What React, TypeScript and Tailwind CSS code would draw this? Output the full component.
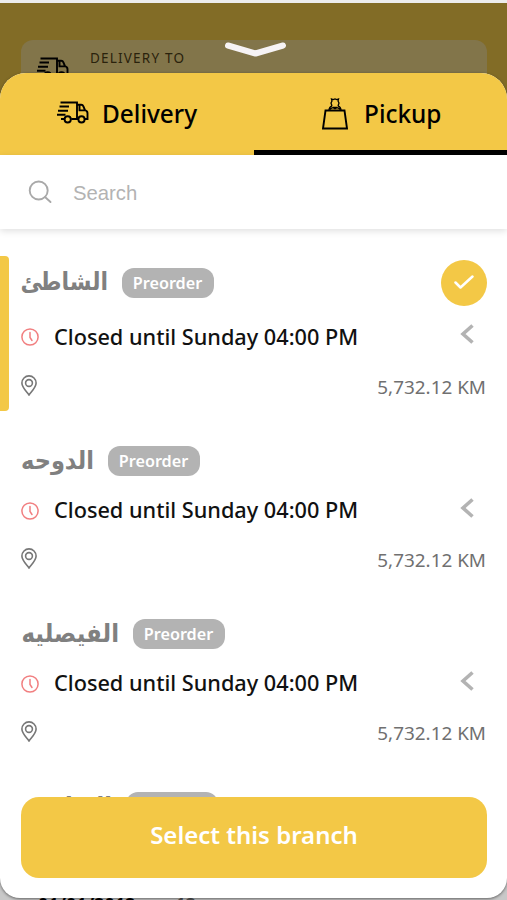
import clsx from "clsx";

type Branch = {
  name: string;
  nameClass: string;
  selected?: boolean;
};

const branches: Branch[] = [
  { name: "الشاطئ", nameClass: "w-[87px] text-[24.500px]", selected: true },
  { name: "الدوحه", nameClass: "w-[73px] text-[25px]" },
  { name: "الفيصليه", nameClass: "w-[98px] text-[25.500px] pt-px" },
  { name: "النزله", nameClass: "w-[91px] text-[25px] pt-px" },
];

function TruckIcon({ className }: { className?: string }) {
  return (
    <svg viewBox="0 0 32 23" className={className} fill="none" stroke="currentColor" strokeWidth="1.900">
      <path d="M3.500 1.500h16.500v16.500h-5.800M20 3.800h4.200c1.100 0 1.800.5 2.200 1.500l1.600 3.900c1.700.6 2.500 1.500 2.500 3v5.800h-2.500M20 18h1.300M22.500 4v5.400h5.500" />
      <path d="M2.500 5.500h9.500M1 9.700h10M0 13.800h8.500M4 18h3.300" />
      <circle cx="10.700" cy="18.400" r="3.100" />
      <circle cx="24.500" cy="18.400" r="3.100" />
    </svg>
  );
}

function BagIcon() {
  return (
    <svg viewBox="0 0 26 32" className="w-[26px] h-8" fill="none" stroke="currentColor" strokeWidth="1.900">
      <path d="M3.500 12.500h19L25 30.500H1z" />
      <path d="M7 12c.2-2.200 1.200-3.500 3-4.200M19 12c-.2-2.200-1.200-3.500-3-4.200M10 8 9 5l1-2-.5-2 1.700.6L13 1l1.800.6L16.500 1 16 3l1 2-1 3M8 11.500c1.300-1.800 3.200-2.200 5-.8 1.800-1.400 3.700-1 5 .8M10.500 9.300h5" strokeWidth="1.300" />
    </svg>
  );
}

function Tabs() {
  return (
    <div className="flex h-[82px] bg-[#f3c846] text-[24.400px] font-medium text-black">
      <button className="flex w-[254px] items-center pl-[57px]">
        <TruckIcon className="w-8 h-[23px] mb-[3px]" />
        <span className="ml-[13px]">Delivery</span>
      </button>
      <button className="flex flex-1 items-center border-b-[5px] border-black pl-[68px] pt-[5px]">
        <BagIcon />
        <span className="ml-[16px]">Pickup</span>
      </button>
    </div>
  );
}

function SearchBar() {
  return (
    <div className="flex h-[74px] items-center bg-white pl-7 shadow-[0_2px_7px_rgba(0,0,0,0.13)]">
      <svg viewBox="0 0 24 24" className="size-6 mb-px" fill="none" stroke="#a9a9a9" strokeWidth="1.900">
        <circle cx="10.700" cy="10.500" r="9" />
        <path d="m17 17 5.500 5" strokeLinecap="round" />
      </svg>
      <span className="ml-[21px] pt-[2px] font-['Liberation_Sans',sans-serif] text-[20.300px] text-[#b3b3b3]">Search</span>
    </div>
  );
}

function BranchItem({ name, nameClass, selected }: Branch) {
  return (
    <li
      className={clsx(
        "relative mb-[27px] pl-[21px] pr-[21px]",
        selected && "before:absolute before:left-0 before:top-0 before:h-[155px] before:w-[9px] before:rounded-r-[4px] before:bg-[#f3c846]"
      )}
    >
      <div className={clsx("flex items-center", selected ? "h-[54px]" : "h-[46px]")}>
        <span
          dir="rtl"
          className={clsx(
            "whitespace-nowrap pb-0.5 leading-none font-bold text-[#808080] font-['DejaVu_Sans_Condensed','DejaVu_Sans',sans-serif]",
            nameClass
          )}
        >
          {name}
        </span>
        <span className="ml-[14px] h-[30px] w-[92px] rounded-[12px] bg-[#b3b3b3] pr-px text-center text-[16.200px] leading-[31px] font-semibold text-white">
          Preorder
        </span>
        {selected && (
          <span className="ml-auto -mr-px flex size-[46px] items-center justify-center rounded-full bg-[#f3c846]">
            <svg viewBox="0 0 20 14" className="w-5 h-[14px] mb-0.5" fill="none" stroke="white" strokeWidth="2.500" strokeLinecap="round" strokeLinejoin="round">
              <path d="m1.500 7.500 5 5L18.500 1.500" />
            </svg>
          </span>
        )}
      </div>
      <div className={clsx("flex items-center", selected ? "h-[54px]" : "h-[53px]")}>
        <svg viewBox="0 0 18 18" className="size-[18px]" fill="none" stroke="#f17f80" strokeWidth="1.500" strokeLinecap="round">
          <circle cx="9" cy="9" r="8.100" />
          <path d="M9 4.500v5l2 3" />
        </svg>
        <span className="ml-[15px] text-[21.700px] font-medium whitespace-nowrap text-[#111]">Closed until Sunday 04:00 PM</span>
        <svg viewBox="0 0 14 20" className="ml-auto mr-3 mb-1.5 h-5 w-[14px]" fill="none" stroke="#b3b3b3" strokeWidth="3.600">
          <path d="M12.500 1.500 3 10l9.500 8.500" />
        </svg>
      </div>
      <div className="flex h-[47px] items-center justify-between">
        <svg viewBox="0 0 16 21" className="w-4 h-[21px] mb-1" fill="none" stroke="#777" strokeWidth="1.600">
          <path d="M8 20C5.500 16.500.9 12.300.9 8a7.100 7.100 0 0 1 14.200 0c0 4.300-4.600 8.500-7.100 12z" />
          <circle cx="8" cy="8" r="3.400" />
        </svg>
        <span className="text-[18.900px] text-[#707070]">5,732.12 KM</span>
      </div>
    </li>
  );
}

export default function App() {
  return (
    <div className="relative h-[900px] w-[507px] overflow-hidden bg-[#c8c8c8] font-['Noto_Sans',sans-serif]">
      <div className="h-[150px] border-t-[3px] border-[#ececec] bg-[#826c26] pl-[21px] pr-5 pt-[37px]">
        <div className="flex h-[70px] rounded-[12px] bg-[#82754a] pl-4 text-[#2a220c]">
          <TruckIcon className="mt-[17px] h-[23px] w-8 text-black" />
          <span className="ml-[21px] mt-[8px] text-[13.500px] tracking-[1.200px]">DELIVERY TO</span>
        </div>
      </div>
      <div className="absolute left-[38px] top-[895px] flex gap-10 text-[18px] leading-none font-bold text-black">
        <span>01/01/2012</span>
        <span className="text-[#555]">جده 12</span>
      </div>
      <svg viewBox="0 0 62 16" className="absolute left-[225px] top-[41px] h-4 w-[62px]" fill="none" stroke="#f6f3f5" strokeWidth="6" strokeLinecap="round" strokeLinejoin="round">
        <path d="M3 4.500 30.500 12.500 58 4.500" />
      </svg>

      <div className="absolute left-0 top-[73px] h-[825px] w-full overflow-hidden rounded-t-[26px] rounded-b-[20px] bg-white shadow-[0_1px_3px_rgba(0,0,0,0.5)]">
        <Tabs />
        <SearchBar />
        <ul className="h-[590px] overflow-hidden pt-[27px]">
          {branches.map((branch) => (
            <BranchItem key={branch.name} {...branch} />
          ))}
        </ul>
        <button className="absolute bottom-5 left-[21px] h-[81px] w-[466px] rounded-[18px] bg-[#f3c846] pb-[5px] text-[24px] font-semibold text-white">
          Select this branch
        </button>
      </div>
    </div>
  );
}
